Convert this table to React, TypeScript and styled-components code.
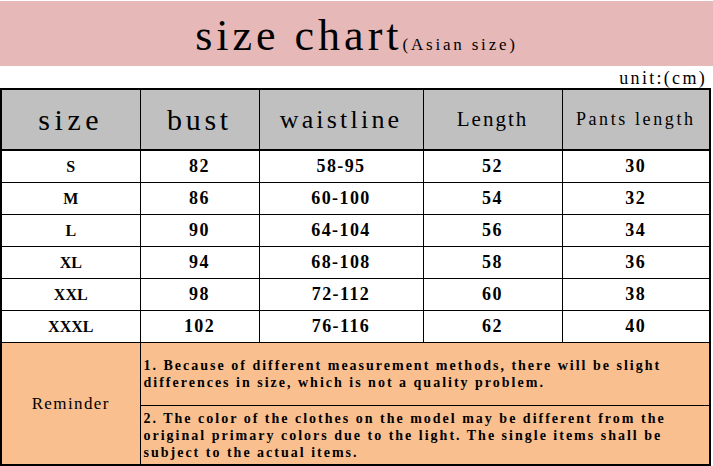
import styled, { createGlobalStyle } from 'styled-components';

const SERIF = `'Liberation Serif', 'DejaVu Serif', serif`;

const GlobalStyle = createGlobalStyle`
  html, body {
    margin: 0;
    padding: 0;
    background: #ffffff;
  }
  body {
    width: 713px;
    height: 466px;
    overflow: hidden;
    font-family: ${SERIF};
    color: #000000;
  }
`;

const Page = styled.div`
  display: flex;
  flex-direction: column;
  width: 713px;
  padding-top: 1px;
`;

const Banner = styled.div`
  display: flex;
  align-items: baseline;
  justify-content: center;
  height: 65px;
  padding-top: 10px;
  box-sizing: border-box;
  background: #e6b8b7;
`;

const Title = styled.span`
  font-size: 44px;
  letter-spacing: 4px;
  line-height: 50px;
`;

const TitleNote = styled.span`
  font-size: 17px;
  letter-spacing: 2.8px;
`;

const UnitRow = styled.div`
  display: flex;
  justify-content: flex-end;
  align-items: flex-end;
  height: 22px;
  padding-right: 6px;
  font-size: 18px;
  letter-spacing: 2.3px;
  line-height: 20px;
`;

const Table = styled.table`
  width: 709px;
  border-collapse: collapse;
  table-layout: fixed;
  border: 2px solid #000000;
`;

const Col = styled.col<{ $w: number }>`
  width: ${(p) => p.$w}px;
`;

const HeadCell = styled.th<{ $size: number; $spacing: number }>`
  height: 59px;
  padding: 0;
  background: #c0c0c0;
  border: 1px solid #000000;
  border-bottom-width: 2px;
  font-family: ${SERIF};
  font-weight: 400;
  font-size: ${(p) => p.$size}px;
  letter-spacing: ${(p) => p.$spacing}px;
  text-align: center;
  vertical-align: middle;
`;

const Cell = styled.td<{ $label?: boolean }>`
  height: 31px;
  padding: 0;
  border: 1px solid #000000;
  font-family: ${SERIF};
  font-weight: 700;
  font-size: ${(p) => (p.$label ? 16 : 18)}px;
  letter-spacing: ${(p) => (p.$label ? 0 : 1.4)}px;
  text-align: center;
  vertical-align: middle;
`;

const ReminderLabel = styled.td`
  padding: 0;
  background: #fabf8f;
  border: 1px solid #000000;
  font-family: ${SERIF};
  font-size: 17px;
  letter-spacing: 1.4px;
  text-align: center;
  vertical-align: middle;
`;

const ReminderText = styled.td<{ $h: number }>`
  height: ${(p) => p.$h}px;
  padding: 0 4px 0 3px;
  background: #fabf8f;
  border: 1px solid #000000;
  font-family: ${SERIF};
  font-weight: 700;
  font-size: 14px;
  letter-spacing: 2px;
  line-height: 17px;
  text-align: left;
  vertical-align: middle;
  white-space: nowrap;
`;

const Line = styled.span`
  display: block;
`;

const headers = [
  { label: 'size', size: 30, spacing: 4.6 },
  { label: 'bust', size: 30, spacing: 3.7 },
  { label: 'waistline', size: 26, spacing: 3.2 },
  { label: 'Length', size: 21, spacing: 2 },
  { label: 'Pants length', size: 18, spacing: 2.6 },
];

const widths = [139, 119, 164, 139, 148];

const rows = [
  ['S', '82', '58-95', '52', '30'],
  ['M', '86', '60-100', '54', '32'],
  ['L', '90', '64-104', '56', '34'],
  ['XL', '94', '68-108', '58', '36'],
  ['XXL', '98', '72-112', '60', '38'],
  ['XXXL', '102', '76-116', '62', '40'],
];

const notes = [
  {
    h: 62,
    lines: [
      '1. Because of different measurement methods, there will be slight',
      'differences in size, which is not a quality problem.',
    ],
  },
  {
    h: 58,
    lines: [
      '2. The color of the clothes on the model may be different from the',
      'original primary colors due to the light. The single items shall be',
      'subject to the actual items.',
    ],
  },
];

export default function App() {
  return (
    <>
      <GlobalStyle />
      <Page>
        <Banner>
          <Title>size chart</Title>
          <TitleNote>(Asian size)</TitleNote>
        </Banner>
        <UnitRow>unit:(cm)</UnitRow>
        <Table>
          <colgroup>
            {widths.map((w, i) => (
              <Col key={i} $w={w} />
            ))}
          </colgroup>
          <thead>
            <tr>
              {headers.map((h) => (
                <HeadCell key={h.label} $size={h.size} $spacing={h.spacing}>
                  {h.label}
                </HeadCell>
              ))}
            </tr>
          </thead>
          <tbody>
            {rows.map((r) => (
              <tr key={r[0]}>
                {r.map((v, i) => (
                  <Cell key={i} $label={i === 0}>
                    {v}
                  </Cell>
                ))}
              </tr>
            ))}
            {notes.map((n, i) => (
              <tr key={i}>
                {i === 0 && <ReminderLabel rowSpan={2}>Reminder</ReminderLabel>}
                <ReminderText colSpan={4} $h={n.h}>
                  {n.lines.map((l) => (
                    <Line key={l}>{l}</Line>
                  ))}
                </ReminderText>
              </tr>
            ))}
          </tbody>
        </Table>
      </Page>
    </>
  );
}
